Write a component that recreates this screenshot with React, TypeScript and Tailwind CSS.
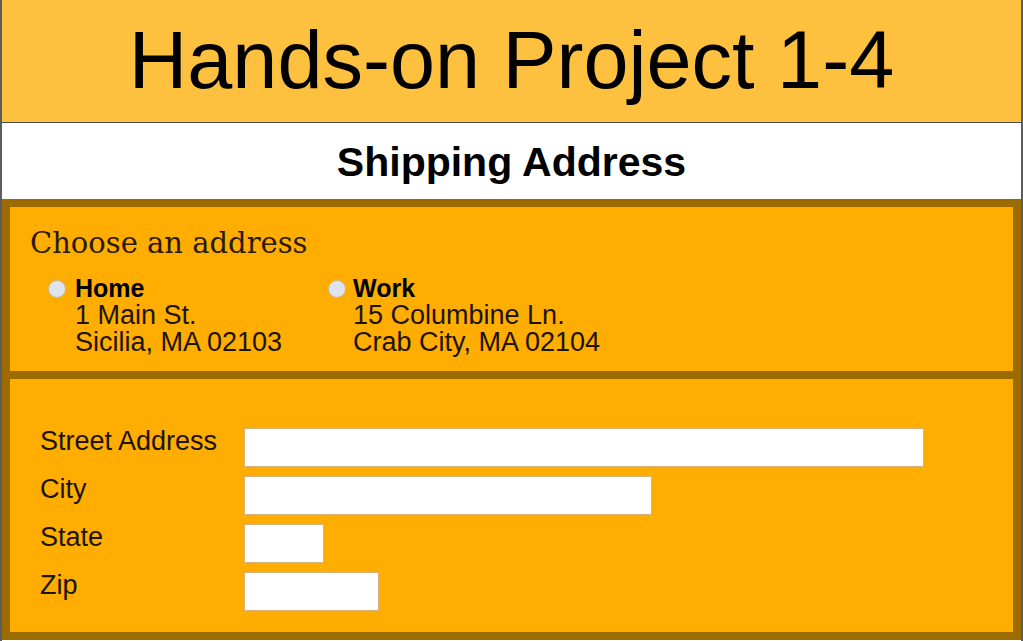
export default function App() {
  const sans = { fontFamily: '"Liberation Sans", Arial, sans-serif' };
  return (
    <div className="w-[1023px] h-[641px] overflow-hidden bg-white border-x-2 border-[#5c5c5c] text-black" style={sans}>
      <header className="h-[123px] bg-[#fec13f] border-b border-[#4a4a4a] flex items-center justify-center">
        <h1 className="text-[81px] leading-none pb-[2px]">Hands-on Project 1-4</h1>
      </header>
      <div className="h-[76px] flex items-center justify-center">
        <h2 className="text-[41px] font-bold leading-none pt-[2px]">Shipping Address</h2>
      </div>

      <fieldset className="h-[180px] border-8 border-[#9c6c00] bg-[#ffad00] pl-[20px] pt-[22px]">
        <h3 className="text-[29px] leading-none text-[#2a1a00]" style={{ fontFamily: '"DejaVu Serif", Georgia, serif' }}>
          Choose an address
        </h3>
        <div className="flex mt-[17px] pl-[18px] text-[27px] leading-[27px] text-[#1d1400]">
          <label className="flex items-start gap-[9px] w-[280px]">
            <span className="mt-[5px] w-[18px] h-[18px] rounded-full bg-[#dfe4ec] border border-[#c8b89a] shrink-0" />
            <span className="flex flex-col">
              <span className="font-bold text-black text-[25px]">Home</span>
              <span>1 Main St.</span>
              <span>Sicilia, MA 02103</span>
            </span>
          </label>
          <label className="flex items-start gap-[7px]">
            <span className="mt-[5px] w-[18px] h-[18px] rounded-full bg-[#dfe4ec] border border-[#c8b89a] shrink-0" />
            <span className="flex flex-col">
              <span className="font-bold text-black text-[25px]">Work</span>
              <span>15 Columbine Ln.</span>
              <span>Crab City, MA 02104</span>
            </span>
          </label>
        </div>
      </fieldset>

      <fieldset className="h-[261px] border-8 border-t-0 border-[#9c6c00] bg-[#ffad00] pl-[30px] pt-[49px]">
        <div className="flex flex-col gap-[9px] text-[27px] leading-[26px] text-[#1d1400]">
          {[
            ["Street Address", "w-[680px]"],
            ["City", "w-[408px]"],
            ["State", "w-[80px]"],
            ["Zip", "w-[135px]"],
          ].map(([label, w]) => (
            <div key={label} className="flex items-start h-[39px]">
              <span className="w-[204px]">{label}</span>
              <input type="text" className={`${w} h-[39px] bg-white border border-[#d6b27a] outline-none`} />
            </div>
          ))}
        </div>
      </fieldset>
    </div>
  );
}
